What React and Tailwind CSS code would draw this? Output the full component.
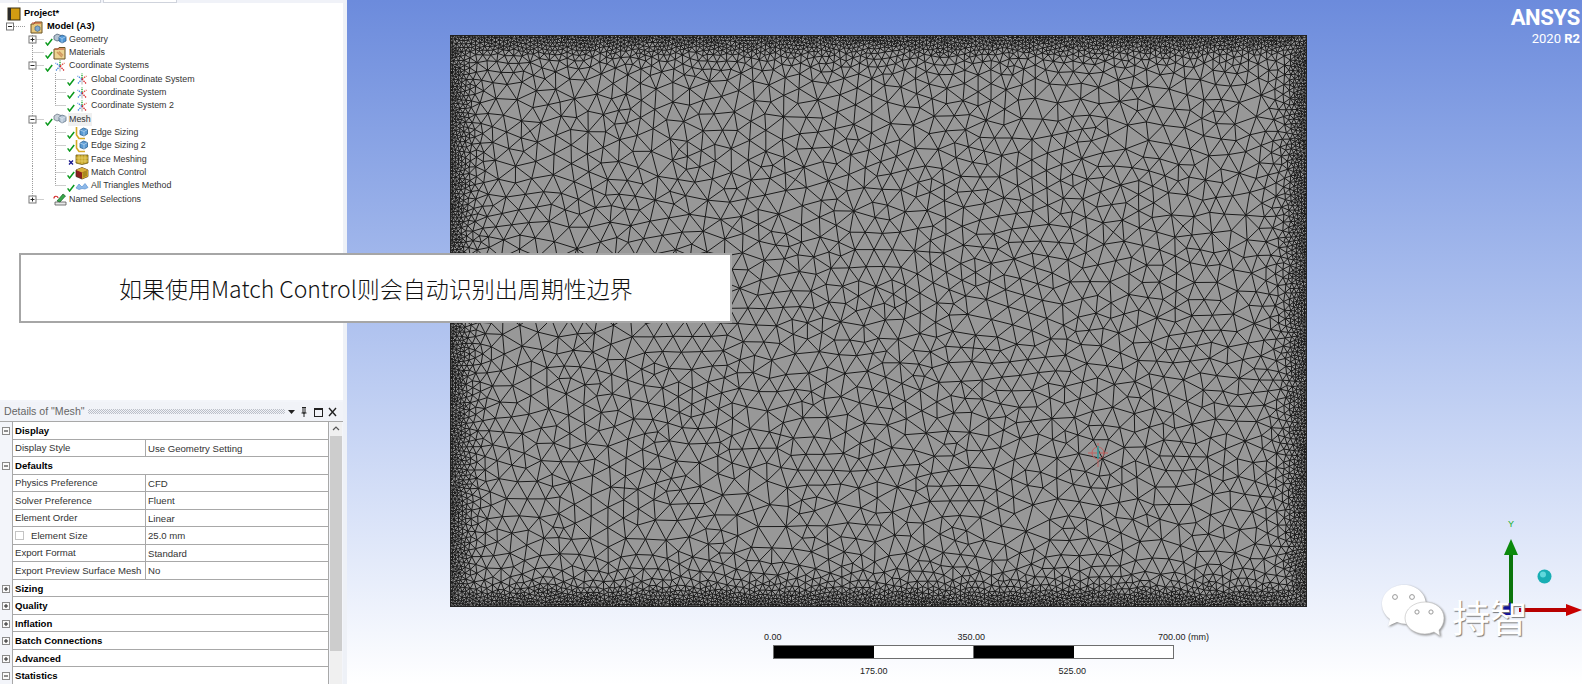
import React, { useMemo } from "react";

const W = 857;
const H = 572;

// small seeded random so the mesh comes out the same every run
const makeRandom = (seed) => () => {
  seed = (seed + 0x6d2b79f5) | 0;
  let t = Math.imul(seed ^ (seed >>> 15), 1 | seed);
  t = (t + Math.imul(t ^ (t >>> 7), 61 | t)) ^ t;
  return ((t ^ (t >>> 14)) >>> 0) / 4294967296;
};

const circum = (pts, i, j, k) => {
  const [ax, ay] = pts[i];
  const [bx, by] = pts[j];
  const [cx, cy] = pts[k];
  const d = 2 * (ax * (by - cy) + bx * (cy - ay) + cx * (ay - by)) || 1e-9;
  const a2 = ax * ax + ay * ay;
  const b2 = bx * bx + by * by;
  const c2 = cx * cx + cy * cy;
  const x = (a2 * (by - cy) + b2 * (cy - ay) + c2 * (ay - by)) / d;
  const y = (a2 * (cx - bx) + b2 * (ax - cx) + c2 * (bx - ax)) / d;
  return { i, j, k, x, y, r: (ax - x) ** 2 + (ay - y) ** 2 };
};

// Delaunay by sweep along x, returns unique edges
const triangulate = (input) => {
  const n = input.length;
  const pts = [...input, [-5000, -3000], [W / 2, 9000], [W + 5000, -3000]];
  const order = [...Array(n).keys()].sort((a, b) => pts[a][0] - pts[b][0]);
  const open = [circum(pts, n, n + 1, n + 2)];
  const closed = [];
  for (const p of order) {
    const [px, py] = pts[p];
    const edges = new Map();
    const addEdge = (a, b) => {
      const key = a < b ? a * 100000 + b : b * 100000 + a;
      if (edges.has(key)) edges.set(key, null);
      else edges.set(key, [a, b]);
    };
    for (let t = open.length - 1; t >= 0; t--) {
      const c = open[t];
      const dx = px - c.x;
      const remove = () => {
        open[t] = open[open.length - 1];
        open.pop();
      };
      if (dx > 0 && dx * dx > c.r) {
        closed.push(c);
        remove();
        continue;
      }
      const dy = py - c.y;
      if (dx * dx + dy * dy - c.r > 1e-7) continue;
      addEdge(c.i, c.j);
      addEdge(c.j, c.k);
      addEdge(c.k, c.i);
      remove();
    }
    for (const e of edges.values()) {
      if (e) open.push(circum(pts, e[0], e[1], p));
    }
  }
  const seen = new Map();
  for (const c of [...closed, ...open]) {
    for (const [a, b] of [[c.i, c.j], [c.j, c.k], [c.k, c.i]]) {
      if (a >= n || b >= n) continue;
      seen.set(a < b ? a * 100000 + b : b * 100000 + a, a < b ? [a, b] : [b, a]);
    }
  }
  return [...seen.values()];
};

const buildMesh = () => {
  const rand = makeRandom(20202);
  const pts = [];
  const step = 2.7;
  const nx = Math.round(W / step);
  const ny = Math.round(H / step);
  for (let i = 0; i <= nx; i++) {
    pts.push([(i * W) / nx, 0], [(i * W) / nx, H]);
  }
  for (let i = 1; i < ny; i++) {
    pts.push([0, (i * H) / ny], [W, (i * H) / ny]);
  }
  const fixed = pts.length;
  const radius = (d) => (d < 15 ? 2.1 + 0.1 * d : Math.min(13.5, 3.6 + 0.28 * (d - 15)));
  const cell = 14;
  const cols = Math.ceil(W / cell) + 1;
  const grid = new Map();
  const put = (p) => {
    const key = Math.floor(p[0] / cell) + cols * Math.floor(p[1] / cell);
    if (!grid.has(key)) grid.set(key, []);
    grid.get(key).push(p);
  };
  pts.forEach(put);
  const candidates = [];
  for (let x = 1; x < W - 1; x += 1.5) {
    for (let y = 1; y < H - 1; y += 1.5) {
      const cx = x + rand() * 1.5 - 0.75;
      const cy = y + rand() * 1.5 - 0.75;
      const d = Math.min(cx, cy, W - cx, H - cy);
      candidates.push([cx, cy, d, d < 55 ? d : 55 + rand() * 1000]);
    }
  }
  candidates.sort((a, b) => a[3] - b[3]);
  for (const [x, y, d] of candidates) {
    const r = radius(d);
    const gx = Math.floor(x / cell);
    const gy = Math.floor(y / cell);
    let ok = true;
    for (let a = gx - 1; a <= gx + 1 && ok; a++) {
      for (let b = gy - 1; b <= gy + 1 && ok; b++) {
        const list = grid.get(a + cols * b);
        if (!list) continue;
        for (const q of list) {
          if ((q[0] - x) ** 2 + (q[1] - y) ** 2 < r * r) {
            ok = false;
            break;
          }
        }
      }
    }
    if (ok) {
      const p = [x, y];
      pts.push(p);
      put(p);
    }
  }
  // a few rounds of smoothing, otherwise the triangles look too random
  let edges = triangulate(pts);
  for (let round = 0; round < 6; round++) {
    const sx = new Float64Array(pts.length);
    const sy = new Float64Array(pts.length);
    const count = new Int32Array(pts.length);
    for (const [a, b] of edges) {
      sx[a] += pts[b][0];
      sy[a] += pts[b][1];
      count[a]++;
      sx[b] += pts[a][0];
      sy[b] += pts[a][1];
      count[b]++;
    }
    for (let i = fixed; i < pts.length; i++) {
      if (!count[i]) continue;
      pts[i] = [
        pts[i][0] + 0.6 * (sx[i] / count[i] - pts[i][0]),
        pts[i][1] + 0.6 * (sy[i] / count[i] - pts[i][1]),
      ];
    }
    edges = triangulate(pts);
  }
  return edges
    .map(([a, b]) => `M${pts[a][0].toFixed(1)} ${pts[a][1].toFixed(1)}L${pts[b][0].toFixed(1)} ${pts[b][1].toFixed(1)}`)
    .join("");
};

const Mesh = () => {
  const d = useMemo(buildMesh, []);
  return (
    <svg width={W} height={H} viewBox={`0 0 ${W} ${H}`} className="block shrink-0">
      <rect width={W} height={H} fill="#989898" />
      <path d={d} fill="none" stroke="#1a1a1a" strokeWidth="1" />
      <rect x="0.5" y="0.5" width={W - 1} height={H - 1} fill="none" stroke="#222" />
      <g transform="translate(648 418)" fill="none">
        <circle r="6" stroke="#c0605f" />
        <path d="M-10 0H10M0-10V14" stroke="#c0605f" />
        <path d="M0-7V6" stroke="#1fa5a5" strokeWidth="1.4" />
      </g>
    </svg>
  );
};

const Check = () => (
  <svg width="8" height="13" viewBox="0 0 8 13" className="shrink-0">
    <path d="M0.6 9.4L2.6 12L7.2 6" fill="none" stroke="#0b9a1d" strokeWidth="1.5" />
  </svg>
);

const Cross = () => (
  <svg width="8" height="13" viewBox="0 0 8 13" className="shrink-0">
    <path d="M2 7.5L6 11.5M6 7.5L2 11.5" fill="none" stroke="#14148c" strokeWidth="1.3" />
  </svg>
);

const NoMark = () => <span className="w-[8px] shrink-0" />;

const icons = {
  project: (
    <>
      <rect x="1" y="1" width="12" height="12" fill="#d39c12" stroke="#3c3010" />
      <rect x="1" y="1" width="3" height="12" fill="#2b2b2b" />
    </>
  ),
  model: (
    <>
      <path d="M1 4H4L5 2H12V13H1Z" fill="#e6c77c" stroke="#6a5222" />
      <path d="M2 3H11" stroke="#c4482e" />
      <path d="M5 7L7.5 5.8L10 7V10L7.5 11.5L5 10Z" fill="#7fa9cf" stroke="#3e6487" strokeWidth="0.7" />
    </>
  ),
  geometry: (
    <>
      <path d="M1 4L4 2L8 3.5V8L4 9L1 7.5Z" fill="#b5c3d1" stroke="#516478" strokeWidth="0.8" />
      <path d="M6 5L9 3L13 4.5V9L9 11L6 9Z" fill="#4f97d8" stroke="#2c5d8c" strokeWidth="0.8" />
      <path d="M6 5L9 6.5L13 4.5M9 6.5V11" fill="none" stroke="#cfe4f7" strokeWidth="0.6" />
    </>
  ),
  materials: (
    <>
      <path d="M1 3H5L6 1.5H12V13H1Z" fill="#ecd492" stroke="#6a5222" />
      <path d="M2 3H11" stroke="#c4482e" />
      <path d="M4 6L9 11M6 5.5L10 9.5" stroke="#d0985f" strokeWidth="1.6" />
    </>
  ),
  coord: (
    <>
      <path d="M7 6.5V1.5" stroke="#17a52c" strokeWidth="1.3" strokeDasharray="1.5 0.8" />
      <path d="M7 7L2.5 4" stroke="#4a8be0" strokeWidth="1.3" strokeDasharray="1.5 0.8" />
      <path d="M7 7L3 11.5" stroke="#4a8be0" strokeWidth="1.3" strokeDasharray="1.5 0.8" />
      <path d="M7 7L11.5 4" stroke="#e0564a" strokeWidth="1.3" strokeDasharray="1.5 0.8" />
      <path d="M7 7L11 11.5" stroke="#d8262a" strokeWidth="1.3" strokeDasharray="1.5 0.8" />
      <path d="M7 8V12.5" stroke="#b0b0b0" strokeWidth="1" />
    </>
  ),
  mesh: (
    <>
      <path d="M1 4L4 2L8 3.5V8L4 9L1 7.5Z" fill="#c8d0d9" stroke="#6d7a88" strokeWidth="0.8" />
      <path d="M6 5L9 3L13 4.5V9L9 11L6 9Z" fill="#b7c7d8" stroke="#5f7387" strokeWidth="0.8" />
      <path d="M6 5L9 6.5L13 4.5M9 6.5V11" fill="none" stroke="#eef3f8" strokeWidth="0.6" />
    </>
  ),
  sizing: (
    <>
      <path d="M1.5 1V9L4 12.5H10" fill="none" stroke="#d6a824" strokeWidth="1.6" />
      <path d="M5 4L8.5 2L12.5 3.5V8L9 10L5 8.5Z" fill="#5b9bd5" stroke="#2f628f" strokeWidth="0.8" />
      <path d="M5 4L9 5.5L12.5 3.5M9 5.5V10" fill="none" stroke="#d5e7f6" strokeWidth="0.6" />
    </>
  ),
  face: (
    <>
      <path d="M1 3H13V11L7 12.5L1 11Z" fill="#c9a92c" stroke="#6e5b12" strokeWidth="0.8" />
      <path d="M1 6H13M1 9H13M4 3V11M7 3V12M10 3V11" stroke="#f0dc80" strokeWidth="0.6" />
    </>
  ),
  match: (
    <>
      <path d="M1 4L7 1.5L13 4V10.5L7 13L1 10.5Z" fill="#8c1f1f" stroke="#3d2a12" strokeWidth="0.7" />
      <path d="M1 4L7 1.5L13 4L7 6.5Z" fill="#d9b23a" />
      <path d="M7 6.5V13L13 10.5V4Z" fill="#c9a22a" />
      <path d="M9 6V11M11 5.2V10" stroke="#6e5b12" strokeWidth="0.7" />
    </>
  ),
  triangles: (
    <>
      <path d="M1 9L4 5L7 8L10 4.5L13 8.5L10 10L7 9.5L4 10.5Z" fill="#8db8e8" stroke="#5b93d4" strokeWidth="0.7" />
    </>
  ),
  named: (
    <>
      <path d="M2 10H13V13H2Z" fill="#e9e9e9" stroke="#555" strokeWidth="0.8" />
      <path d="M4 9L10 2L12.5 4L7 10Z" fill="#37a84a" stroke="#1a5c27" strokeWidth="0.7" />
      <path d="M1 6.5A2 2 0 0 1 5 6" fill="none" stroke="#d42a2a" strokeWidth="1.2" />
    </>
  ),
};

const Icon = ({ name }) => (
  <svg width="14" height="14" viewBox="0 0 14 14" className="shrink-0 overflow-visible">
    {icons[name]}
  </svg>
);

const Expander = ({ x, y, open }) => (
  <g>
    <rect x={x - 3.5} y={y - 3.5} width="7" height="7" fill="#fff" stroke="#777" />
    <path d={`M${x - 2} ${y}H${x + 2}${open ? "" : `M${x} ${y - 2}V${y + 2}`}`} stroke="#222" />
  </g>
);

// dotted guide lines left of a row, one svg per row
const Lines = ({ width, guides = [], branch, expander, open }) => (
  <svg width={width} height="13.33" viewBox={`0 0 ${width} 13.33`} className="shrink-0">
    <g stroke="#9c9c9c" strokeDasharray="1 1" fill="none">
      {guides.map(([x, end]) => (
        <path key={x} d={`M${x} 0V${end ? 6.5 : 13.33}`} />
      ))}
      {branch && <path d={`M${branch[0]} 6.5H${branch[1]}`} />}
    </g>
    {expander && <Expander x={expander} y={6.5} open={open} />}
  </svg>
);

const tree = [
  { label: "Geometry", icon: "geometry", mark: "ok", depth: 1, expander: true, open: false },
  { label: "Materials", icon: "materials", mark: "ok", depth: 1 },
  { label: "Coordinate Systems", icon: "coord", mark: "ok", depth: 1, expander: true, open: true },
  { label: "Global Coordinate System", icon: "coord", mark: "ok", depth: 2 },
  { label: "Coordinate System", icon: "coord", mark: "ok", depth: 2 },
  { label: "Coordinate System 2", icon: "coord", mark: "ok", depth: 2, last: true },
  { label: "Mesh", icon: "mesh", mark: "ok", depth: 1, expander: true, open: true, selected: true },
  { label: "Edge Sizing", icon: "sizing", mark: "ok", depth: 2 },
  { label: "Edge Sizing 2", icon: "sizing", mark: "ok", depth: 2 },
  { label: "Face Meshing", icon: "face", mark: "x", depth: 2 },
  { label: "Match Control", icon: "match", mark: "ok", depth: 2 },
  { label: "All Triangles Method", icon: "triangles", mark: "ok", depth: 2, last: true },
  { label: "Named Selections", icon: "named", depth: 1, expander: true, open: false, end: true },
];

const TreeRow = ({ row }) => {
  const lines =
    row.depth === 1 ? (
      <Lines
        width={45}
        guides={[[32.5, row.end]]}
        branch={[32.5, 44]}
        expander={row.expander ? 32.5 : null}
        open={row.open}
      />
    ) : (
      <Lines width={67} guides={[[32.5, false], [55.5, row.last]]} branch={[55.5, 66]} />
    );
  return (
    <div className="flex h-[13.33px] items-center">
      {lines}
      {row.mark === "ok" ? <Check /> : row.mark === "x" ? <Cross /> : <NoMark />}
      <Icon name={row.icon} />
      <span className={`ml-[1px] px-[1px] leading-[13px] ${row.selected ? "bg-[#f0f0f0]" : ""}`}>{row.label}</span>
    </div>
  );
};

const Tree = () => (
  <div className="flex-1 bg-white pt-[4px] text-[8.9px] text-[#333]">
    <div className="flex h-[13.33px] items-center pl-[7px] text-[9.3px] font-bold text-black">
      <Icon name="project" />
      <span className="ml-[3px]">Project*</span>
    </div>
    <div className="flex h-[12.33px] items-center text-[9.3px] font-bold text-black">
      <Lines width={30} branch={[10, 26]} expander={10} open />
      <Icon name="model" />
      <span className="ml-[3px]">Model (A3)</span>
    </div>
    {tree.map((row) => (
      <TreeRow key={row.label} row={row} />
    ))}
  </div>
);

const rows = [
  { group: "Display", open: true },
  { label: "Display Style", value: "Use Geometry Setting" },
  { group: "Defaults", open: true },
  { label: "Physics Preference", value: "CFD" },
  { label: "Solver Preference", value: "Fluent" },
  { label: "Element Order", value: "Linear" },
  { label: "Element Size", value: "25.0 mm", checkbox: true },
  { label: "Export Format", value: "Standard" },
  { label: "Export Preview Surface Mesh", value: "No" },
  { group: "Sizing" },
  { group: "Quality" },
  { group: "Inflation" },
  { group: "Batch Connections" },
  { group: "Advanced" },
  { group: "Statistics", open: true },
];

const GroupToggle = ({ open }) => (
  <svg width="12" height="17" viewBox="0 0 12 17" className="shrink-0">
    <rect x="2.5" y="5.5" width="7" height="7" fill="#fafafa" stroke="#8a8a8a" />
    <path d={open ? "M4 9H8" : "M4 9H8M6 7V11"} stroke="#222" />
  </svg>
);

const DetailRow = ({ row }) => (
  <div className="flex h-[17.54px] shrink-0">
    <div className="w-[12px] shrink-0">{row.group && <GroupToggle open={row.open} />}</div>
    <div className="flex min-w-0 flex-1 border-b border-l border-[#a8a8a8] bg-white leading-[17px]">
      {row.group ? (
        <span className="pl-[2px] font-bold text-black">{row.group}</span>
      ) : (
        <>
          <div className="flex w-[133px] shrink-0 items-center whitespace-nowrap border-r border-[#a8a8a8] pl-[2px]">
            {row.checkbox && <span className="mr-[7px] h-[9px] w-[9px] border border-[#c4c4c4] bg-white" />}
            {row.label}
          </div>
          <div className="pl-[2px]">{row.value}</div>
        </>
      )}
    </div>
  </div>
);

const Details = () => (
  <div className="flex h-[284px] shrink-0 flex-col overflow-hidden bg-[#f3f5fa] text-[9.6px] text-[#333]">
    <div className="mt-[2px] flex h-[19px] shrink-0 items-center bg-[#f1f3f8] pl-[4px] pr-[5px] text-[#666]">
      <span className="text-[10.6px]">Details of "Mesh"</span>
      <div className="mx-[3px] h-[5px] flex-1 bg-[repeating-conic-gradient(#bcc0c9_0_25%,transparent_0_50%)] bg-[length:2px_2px]" />
      <svg width="50" height="12" viewBox="0 0 50 12" className="shrink-0">
        <path d="M0 4H7L3.5 8Z" fill="#222" />
        <path d="M14 1.5H18M15 1.5V7H17V1.5M13.5 7H18.5M16 7V11" fill="none" stroke="#222" />
        <rect x="26.5" y="2.5" width="8" height="8" fill="none" stroke="#222" />
        <path d="M26.5 3.5H34.5" stroke="#222" />
        <path d="M41 2L48 10M48 2L41 10" stroke="#222" strokeWidth="1.4" />
      </svg>
    </div>
    <div className="flex min-h-0 flex-1 border-t border-[#a8a8a8]">
      <div className="flex w-[329px] shrink-0 flex-col border-r border-[#a8a8a8]">
        {rows.map((row) => (
          <DetailRow key={row.label || row.group} row={row} />
        ))}
      </div>
      <div className="ml-[1px] flex w-[12px] shrink-0 flex-col bg-[#f0f0f0]">
        <svg width="12" height="14" viewBox="0 0 12 14" className="shrink-0">
          <path d="M3 8L6 5L9 8" fill="none" stroke="#555" strokeWidth="1.2" />
        </svg>
        <div className="h-[215px] bg-[#cdcdcd]" />
      </div>
    </div>
  </div>
);

const ScaleBar = () => (
  <div className="ml-[323px] mt-[25px] w-[480px] text-[9px] leading-[11px] text-[#222]">
    <div className="flex h-[13px] w-[400px] justify-between">
      <span className="-ml-[9px]">0.00</span>
      <span className="ml-[3px]">350.00</span>
      <span className="-mr-[36px] whitespace-pre">700.00 (mm)</span>
    </div>
    <div className="flex h-[14px] w-[401px] border border-[#6e6e6e]">
      <div className="flex-1 bg-black" />
      <div className="flex-1 border-r border-[#6e6e6e] bg-white" />
      <div className="flex-1 bg-black" />
      <div className="flex-1 bg-white" />
    </div>
    <div className="mt-[7px] flex w-[313px] justify-between pl-[87px]">
      <span>175.00</span>
      <span>525.00</span>
    </div>
  </div>
);

const Triad = () => (
  <svg width="82" height="110" viewBox="0 0 82 110" className="absolute bottom-[59px] right-0">
    <text x="8" y="12" fontSize="9" fill="#17b02c" fontFamily="Liberation Sans, sans-serif">Y</text>
    <path d="M9 40H13V95H9Z" fill="#0b750b" />
    <path d="M11 24L18 40H4Z" fill="#0c8a0c" />
    <path d="M19 93H67V97H19Z" fill="#b80000" />
    <path d="M66 89L82 95L66 101Z" fill="#c80000" />
    <path d="M3 92L11 87V100H3Z" fill="#10109a" />
    <circle cx="44.5" cy="61.5" r="7" fill="#18aeb4" />
    <circle cx="43" cy="59.5" r="3" fill="#5fd8dc" />
  </svg>
);

const Watermark = () => (
  <div className="absolute bottom-[46px] right-[54px] flex items-end gap-[7px]">
    <svg width="64" height="54" viewBox="0 0 64 54" className="drop-shadow-[1px_1px_1px_#888]">
      <path d="M23 1C11 1 1 9 1 20C1 27 5 32 9 35L7 42L16 38C19 39 22 40 26 40C34 40 44 33 45 21C45 9 35 1 23 1Z" fill="#fff" />
      <path d="M44 18C33 18 24 25 24 34C24 43 33 50 44 50C47 50 50 49 53 48L59 52L58 46C61 43 63 39 63 34C63 25 55 18 44 18Z" fill="#fff" stroke="#bbb" strokeWidth="0.6" />
      <circle cx="14" cy="13" r="2.4" fill="#fff" stroke="#999" />
      <circle cx="31" cy="13" r="2.4" fill="#fff" stroke="#999" />
      <circle cx="36" cy="28" r="2.1" fill="#fff" stroke="#999" />
      <circle cx="50" cy="28" r="2.1" fill="#fff" stroke="#999" />
    </svg>
    <span className="text-[38px] leading-[44px] text-white [font-family:'Noto_Sans_CJK_SC',sans-serif] [text-shadow:1px_1px_1px_#777]">
      持智
    </span>
  </div>
);

const Logo = () => (
  <div className="absolute right-[2px] top-[5px] flex flex-col items-end text-white [font-family:'Roboto',sans-serif]">
    <span className="text-[22px] font-bold leading-[26px] tracking-[-0.3px]">ANSYS</span>
    <span className="text-[13px] leading-[16px]">
      2020 <b>R2</b>
    </span>
  </div>
);

const Callout = () => (
  <div className="absolute left-[19px] top-[253px] flex h-[70px] w-[713px] items-center border-2 border-[#a6a6a6] bg-white pl-[98px] text-[23px] font-light text-[#111] [font-family:'Noto_Sans_CJK_SC',sans-serif]">
    如果使用Match Control则会自动识别出周期性边界
  </div>
);

export default function App() {
  return (
    <div className="relative flex h-[684px] w-[1582px] overflow-hidden [font-family:'Liberation_Sans',sans-serif]">
      <div className="flex w-[347px] shrink-0 flex-col border-r-4 border-[#eef1f7] bg-[#eef1f7]">
        <div className="flex h-[3px] shrink-0 gap-[2px] bg-[#f0f2f8] pl-[18px]">
          <div className="w-[83px] border-x border-b border-[#cfd3dc] bg-white" />
          <div className="w-[74px] border-x border-b border-[#cfd3dc] bg-white" />
        </div>
        <Tree />
        <Details />
      </div>
      <div className="relative flex flex-1 flex-col bg-linear-to-b from-[#6c8bdc] to-[#ffffff] pl-[103px] pt-[35px]">
        <Mesh />
        <ScaleBar />
        <Logo />
        <Triad />
        <Watermark />
      </div>
      <Callout />
    </div>
  );
}
